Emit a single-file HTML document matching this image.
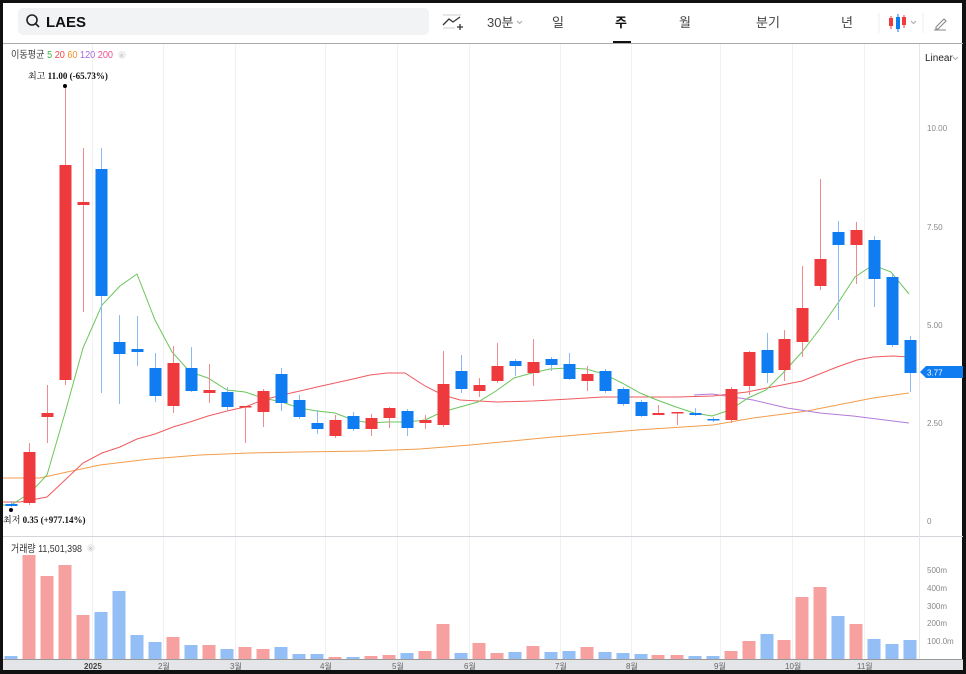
<!DOCTYPE html>
<html><head><meta charset="utf-8">
<style>
html,body{margin:0;padding:0;background:#111;}
#f{position:absolute;left:0;top:0;width:966px;height:674px;background:#111;overflow:hidden;font-family:"Liberation Sans","Noto Sans CJK KR",sans-serif;}
#p{position:absolute;left:3px;top:3px;width:959px;height:667px;background:#fff;overflow:hidden;}
</style></head><body>
<div id="f"><div id="p"></div>
<svg id="s" width="966" height="674" style="position:absolute;left:0;top:0" xmlns="http://www.w3.org/2000/svg">
<g id="grid" stroke="#f0f1f3" stroke-width="1"></g>
<rect x="18" y="8" width="411" height="27" rx="5" fill="#f2f3f5"/>
<circle cx="32" cy="20" r="5" fill="none" stroke="#222" stroke-width="1.6"/>
<line x1="35.5" y1="23.5" x2="39" y2="27" stroke="#222" stroke-width="1.6"/>
<text x="46" y="27" font-family="Liberation Sans,sans-serif" font-weight="bold" font-size="15" fill="#111">LAES</text>
<line x1="443" y1="15" x2="461" y2="15" stroke="#ccc"/>
<line x1="443" y1="28" x2="455" y2="28" stroke="#ccc"/>
<polyline points="443,25 449,19 453,22 460,17" fill="none" stroke="#333" stroke-width="1.3"/>
<path d="M457 27h6M460 24v6" stroke="#333" stroke-width="1.3"/>
<text x="487" y="27" font-family="Liberation Sans,Noto Sans CJK KR,sans-serif" font-size="13" fill="#444">30분</text>
<path d="M517 21l2.5 2.5 2.5-2.5" fill="none" stroke="#aaa"/>
<text x="552" y="27" font-family="Noto Sans CJK KR,sans-serif" font-size="13" fill="#444">일</text>
<text x="615" y="27" font-family="Noto Sans CJK KR,sans-serif" font-size="13" font-weight="bold" fill="#111">주</text>
<rect x="613" y="41" width="18" height="3" fill="#111"/>
<text x="679" y="27" font-family="Noto Sans CJK KR,sans-serif" font-size="13" fill="#444">월</text>
<text x="756" y="27" font-family="Noto Sans CJK KR,sans-serif" font-size="13" fill="#444">분기</text>
<text x="841" y="27" font-family="Noto Sans CJK KR,sans-serif" font-size="13" fill="#444">년</text>
<line x1="879" y1="13" x2="879" y2="33" stroke="#eee"/>
<line x1="923" y1="13" x2="923" y2="33" stroke="#eee"/>
<line x1="891" y1="16" x2="891" y2="29" stroke="#ef3b3b"/><rect x="889" y="18" width="4" height="8" fill="#ef3b3b"/>
<line x1="898" y1="14" x2="898" y2="32" stroke="#0f7cf2"/><rect x="896" y="17" width="4" height="12" fill="#0f7cf2"/>
<line x1="904" y1="15" x2="904" y2="28" stroke="#ef3b3b"/><rect x="902" y="17" width="4" height="8" fill="#ef3b3b"/>
<path d="M911 21l2.5 2.5 2.5-2.5" fill="none" stroke="#aaa"/>
<path d="M936 27l8-8 2 2-8 8h-2z" fill="none" stroke="#888" stroke-width="1.1"/>
<line x1="934" y1="30" x2="946" y2="30" stroke="#888"/>
<line x1="3" y1="43.5" x2="963" y2="43.5" stroke="#aaa"/>
<line x1="3" y1="536.5" x2="963" y2="536.5" stroke="#d4d4da"/>
<line x1="919.5" y1="44" x2="919.5" y2="659" stroke="#e6e6ea"/>
<rect x="3" y="659" width="960" height="11" fill="#e4e5e8"/>
<line x1="3" y1="659.5" x2="963" y2="659.5" stroke="#999"/>
<text x="11" y="58" font-family="Liberation Sans,Noto Sans CJK KR,sans-serif" font-size="10" fill="#444" textLength="102" lengthAdjust="spacingAndGlyphs">이동평균 <tspan fill="#3fb93f">5</tspan> <tspan fill="#f2454a">20</tspan> <tspan fill="#f7922f">60</tspan> <tspan fill="#a667d8">120</tspan> <tspan fill="#ef4f8f">200</tspan></text>
<circle cx="122" cy="55" r="4" fill="#eee"/><text x="119.5" y="58" font-size="7" fill="#bbb">×</text>
<text x="925" y="61" font-family="Liberation Sans,sans-serif" font-size="10" fill="#222">Linear</text>
<path d="M953 57l2.5 2.5 2.5-2.5" fill="none" stroke="#aaa"/>
<g font-family="Liberation Sans,sans-serif" font-size="8" fill="#888">
<text x="927" y="131">10.00</text><text x="927" y="230">7.50</text><text x="927" y="328">5.00</text><text x="927" y="426">2.50</text><text x="927" y="524">0</text>
<text x="927" y="573">500m</text><text x="927" y="591">400m</text><text x="927" y="609">300m</text><text x="927" y="626">200m</text><text x="927" y="644">100.0m</text>
</g>
<g font-family="Liberation Sans,Noto Sans CJK KR,sans-serif" font-size="8" fill="#666">
<text x="84" y="669" font-weight="bold" fill="#444">2025</text><text x="158" y="669">2월</text><text x="230" y="669">3월</text><text x="320" y="669">4월</text><text x="392" y="669">5월</text><text x="464" y="669">6월</text><text x="555" y="669">7월</text><text x="626" y="669">8월</text><text x="714" y="669">9월</text><text x="785" y="669">10월</text><text x="857" y="669">11월</text>
</g>
<text x="11" y="552" font-family="Liberation Sans,Noto Sans CJK KR,sans-serif" font-size="10.5" fill="#333" textLength="71" lengthAdjust="spacingAndGlyphs">거래량 11,501,398</text>
<circle cx="91" cy="548" r="4" fill="#eee"/><text x="88.5" y="551" font-size="7" fill="#bbb">×</text>
<g id="vol"></g>
<g id="ma" fill="none" stroke-width="1"></g>
<g id="cdl"></g>
<circle cx="65" cy="86" r="2" fill="#000"/>
<text x="28" y="79" font-family="Liberation Serif,Noto Serif CJK SC,serif" font-size="9" fill="#111">최고 <tspan font-weight="bold">11.00 (-65.73%)</tspan></text>
<circle cx="11" cy="510" r="2" fill="#000"/>
<text x="3" y="523" font-family="Liberation Serif,Noto Serif CJK SC,serif" font-size="9" fill="#111">최저 <tspan font-weight="bold">0.35 (+977.14%)</tspan></text>
<path d="M920 372l6-6h37v12h-37z" fill="#0f7cf2"/>
<text x="927" y="375.5" font-family="Liberation Sans,sans-serif" font-size="8" fill="#fff">3.77</text>
</svg>
</div>
<script>
var NS="http://www.w3.org/2000/svg";
function el(g,t,a){var e=document.createElementNS(NS,t);for(var k in a)e.setAttribute(k,a[k]);document.getElementById(g).appendChild(e);}
[92,163,235,325,397,469,560,631,720,792,864].forEach(function(x){el("grid","line",{x1:x+.5,y1:44,x2:x+.5,y2:659});});
var C=[[11,'b',504,506,501,507],[29,'r',452,503,443,505],[47,'r',413,417,385,443],[65,'r',165,380,86,385],[83,'r',202,205,148,312],[101,'b',169,296,148,393],[119,'b',342,354,315,404],[137,'b',349,352,316,366],[155,'b',368,396,353,402],[173,'r',363,406,346,413],[191,'b',368,391,347,392],[209,'r',390,393,364,403],[227,'b',392,407,387,411],[245,'r',406,407,406,443],[263,'r',391,412,389,427],[281,'b',374,403,368,411],[299,'b',400,417,395,419],[317,'b',423,429,410,434],[335,'r',420,436,415,438],[353,'b',416,429,412,431],[371,'r',418,429,414,436],[389,'r',408,418,407,428],[407,'b',411,428,409,436],[425,'r',420,423,415,429],[443,'r',384,425,351,427],[461,'b',371,389,355,393],[479,'r',385,391,378,397],[497,'r',366,381,343,383],[515,'b',361,366,359,376],[533,'r',362,373,339,386],[551,'b',359,365,357,371],[569,'b',364,379,353,380],[587,'r',374,381,366,391],[605,'b',371,391,369,393],[623,'b',389,404,387,406],[641,'b',402,416,400,417],[658,'r',413,415,405,415],[677,'r',412,413,412,425],[695,'b',413,415,408,416],[713,'b',419,420,417,422],[731,'r',389,420,387,423],[749,'r',352,386,351,395],[767,'b',350,373,333,383],[784,'r',339,370,330,381],[802,'r',308,342,266,357],[820,'r',259,286,179,290],[838,'b',232,245,221,320],[856,'r',230,245,222,284],[874,'b',240,279,236,307],[892,'b',277,345,273,347],[910,'b',340,373,336,392]];
var V=[656,555,576,565,615,612,591,635,642,637,645,645,649,647,649,647,654,654,657,657,656,655,653,651,624,653,643,653,652,646,652,651,647,652,653,654,655,655,656,656,651,641,634,640,597,587,616,624,639,644,640];
C.forEach(function(c,i){var col=c[1]=='r'?'#ef3a3d':'#0f7cf2',wc=c[1]=='r'?'#f08a8c':'#8ab9f5';
el("vol","rect",{x:c[0]-6.5,y:V[i],width:13,height:659-V[i],fill:c[1]=='r'?'#f6a0a0':'#93bef6'});
el("cdl","line",{x1:c[0]+.5,y1:c[4],x2:c[0]+.5,y2:c[5],stroke:wc});
el("cdl","rect",{x:c[0]-5.5,y:c[2],width:12,height:Math.max(1.5,c[3]-c[2]),fill:col});});
function pl(c,p){el("ma","polyline",{points:p,stroke:c});}
pl("#f39d4c","3,478 40,478 67,472 100,465 150,459 200,455 250,453 300,452 367,451 420,449 470,445 553,437 637,430 713,425 753,418 807,411 873,398 909,393");
pl("#b27ad8","694,395 712,394 753,400 787,408 820,413 853,416 909,423");
pl("#ef5a5e","3,502 20,502 47,497 65,480 83,463 102,453 120,447 137,439 155,434 173,427 190,422 208,416 227,411 245,407 263,400 282,395 300,391 317,387 335,383 353,379 370,375 387,373 405,373 425,386 443,395 460,400 497,402 533,401 570,399 603,397 640,397 677,397 713,396 747,392 767,388 802,381 837,367 857,360 873,357 893,356 909,357");
pl("#6cc55a","3,505 11,505 30,493 47,475 65,413 83,348 102,305 120,286 137,274 155,320 172,352 190,372 208,378 227,390 245,392 263,398 282,402 299,408 317,411 335,413 353,420 370,423 387,422 407,422 425,420 442,412 460,407 478,402 496,391 514,378 532,373 550,369 568,368 586,369 604,374 622,383 640,393 657,400 676,407 694,413 712,416 730,410 748,398 766,390 783,373 802,352 819,330 838,303 855,277 873,265 891,272 909,294");
</script>
</body></html>
